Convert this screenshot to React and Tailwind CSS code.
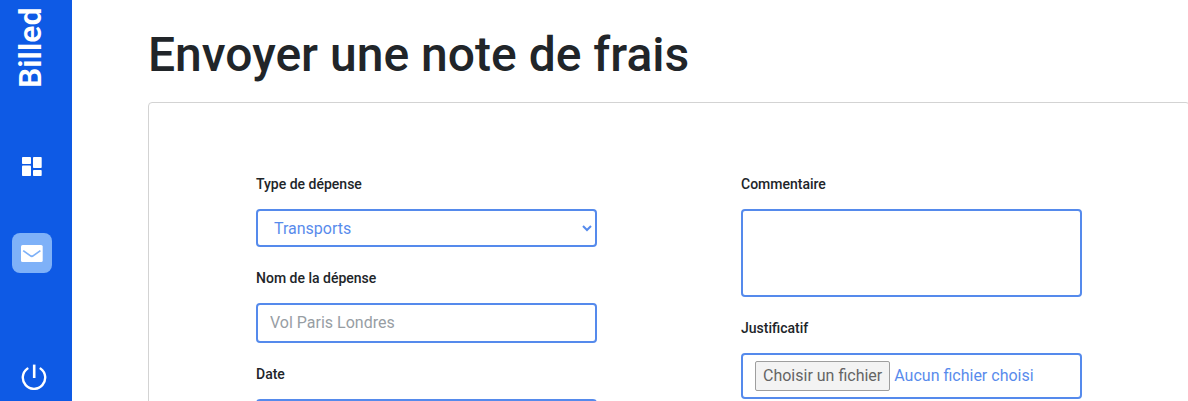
import React from 'react';

const field =
  'block w-full rounded border-2 border-[#0e5ae5] bg-white text-base leading-6 text-[#0e5ae5] opacity-70 placeholder:text-[#6c757d]';

function GridIcon() {
  return (
    <svg width="20" height="20" viewBox="0 0 20 20" fill="currentColor" aria-hidden="true">
      <rect x="0" y="0" width="9" height="7" rx="0.8" />
      <rect x="0" y="8.5" width="9" height="10.5" rx="0.8" />
      <rect x="11" y="0" width="8.7" height="11" rx="0.8" />
      <rect x="11" y="13" width="8.7" height="6" rx="0.8" />
    </svg>
  );
}

function MailIcon() {
  return (
    <svg width="22" height="18" viewBox="0 0 22 18" fill="none" aria-hidden="true">
      <rect x="0" y="1" width="21.7" height="17" rx="1.6" fill="white" />
      <path d="M2.2 6.6 L9.2 11.6 Q10.8 12.9 12.4 11.6 L19.4 6.6" stroke="#7eb1f8" strokeWidth="1.7" />
    </svg>
  );
}

function PowerIcon() {
  return (
    <svg width="26" height="26" viewBox="0 0 26 26" fill="none" stroke="white" aria-hidden="true">
      <path d="M6.4 4.6 A11.2 11.2 0 1 0 19.6 4.6" strokeWidth="2.4" strokeLinecap="round" />
      <path d="M13.2 0.6 V14" strokeWidth="2.6" />
    </svg>
  );
}

function Field({ id, label, children }) {
  return (
    <div className="flex flex-col gap-3.5">
      <label htmlFor={id} className="text-sm leading-[22px] font-medium">
        {label}
      </label>
      {children}
    </div>
  );
}

export default function App() {
  return (
    <div className="flex h-screen overflow-hidden bg-white font-['Roboto',sans-serif] text-[#212529]">
      <nav className="flex w-[72px] shrink-0 flex-col items-start bg-[#0e5ae5] pt-2 pl-3 text-white">
        <span className="h-20 w-9 rotate-180 text-[32px] leading-9 font-semibold [writing-mode:vertical-rl]">
          Billed
        </span>
        <a href="#bills" aria-label="Mes notes de frais" className="mt-[59px] flex size-10 items-center justify-center">
          <GridIcon />
        </a>
        <a
          href="#new"
          aria-label="Nouvelle note de frais"
          className="mt-[46px] flex size-10 items-center justify-center rounded-lg bg-[#7eb1f8]"
        >
          <MailIcon />
        </a>
        <button type="button" aria-label="Se déconnecter" className="mt-[84px] flex h-10 w-11 items-center justify-center">
          <PowerIcon />
        </button>
      </nav>

      <main className="-mr-0.5 min-w-0 flex-1 pt-6 pl-[76px]">
        <h1 className="text-5xl leading-[62px] font-medium">Envoyer une note de frais</h1>
        <form className="mt-4 grid grid-cols-2 gap-x-36 rounded border border-[#d3d3d3] px-[107px] py-[70px]">
          <div className="flex flex-col gap-5">
            <Field id="type" label="Type de dépense">
              <select id="type" className={`${field} h-[38px] px-3`}>
                <option>Transports</option>
                <option>Restaurants et bars</option>
                <option>Hôtel et logement</option>
              </select>
            </Field>
            <Field id="name" label="Nom de la dépense">
              <input id="name" type="text" placeholder="Vol Paris Londres" className={`${field} h-10 px-3 pb-0.5`} />
            </Field>
            <Field id="date" label="Date">
              <input id="date" type="date" className={`${field} h-10 px-3 pb-0.5`} />
            </Field>
          </div>
          <div className="flex flex-col gap-5">
            <Field id="comment" label="Commentaire">
              <textarea id="comment" className={`${field} h-[88px] resize-none px-3 py-1.5`} />
            </Field>
            <Field id="file" label="Justificatif">
              <label className={`${field} px-3 py-1.5`}>
                <input id="file" type="file" className="sr-only" />
                <span className="flex items-center gap-1">
                  <span className="rounded-xs border border-[#767676] bg-[#efefef] px-[7px] py-0.5 text-[#222222]">
                    Choisir un fichier
                  </span>
                  <span>Aucun fichier choisi</span>
                </span>
              </label>
            </Field>
          </div>
        </form>
      </main>
    </div>
  );
}
